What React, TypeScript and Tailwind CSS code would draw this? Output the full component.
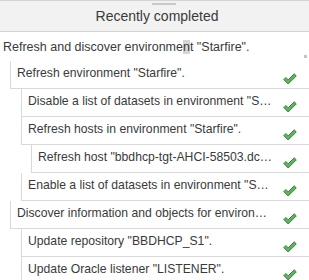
import React from 'react';

type Task = { label: string; level: number };

const TASKS: Task[] = [
  { label: 'Refresh environment "Starfire".', level: 1 },
  { label: 'Disable a list of datasets in environment "Starfire".', level: 2 },
  { label: 'Refresh hosts in environment "Starfire".', level: 2 },
  { label: 'Refresh host "bbdhcp-tgt-AHCI-58503.dcenter.example.com".', level: 3 },
  { label: 'Enable a list of datasets in environment "Starfire".', level: 2 },
  { label: 'Discover information and objects for environment "Starfire".', level: 1 },
  { label: 'Update repository "BBDHCP_S1".', level: 2 },
  { label: 'Update Oracle listener "LISTENER".', level: 2 },
];

const INDENT: Record<number, string> = {
  1: 'ml-[10px]',
  2: 'ml-[21px]',
  3: 'ml-[31px]',
};

function Check() {
  return (
    <svg width="14" height="12" viewBox="0 0 14 12" className="block">
      <polygon
        points="0.8,6.6 2.9,4.5 5.2,6.8 11.2,0.8 13.3,2.9 5.2,11"
        fill="#62b162"
        stroke="#3b803b"
        strokeWidth="1"
        strokeLinejoin="round"
      />
    </svg>
  );
}

function TaskRow({ task }: { task: Task }) {
  return (
    <div
      className={`flex h-[28px] border-l border-b border-[#d9d9d9] ${INDENT[task.level]}`}
    >
      <span className="min-w-0 flex-1 truncate pl-[6px] pt-[5px] text-[12.2px] leading-[15px] text-[#3a3a3a]">
        {task.label}
      </span>
      <span className="mb-[3px] ml-[11px] mr-[12px] self-end">
        <Check />
      </span>
    </div>
  );
}

export default function App() {
  return (
    <div
      className="h-[280px] w-[309px] overflow-hidden bg-white"
      style={{ fontFamily: '"Liberation Sans", Arial, sans-serif' }}
    >
      {/* Header with drag grip */}
      <div className="relative flex h-[32px] items-center justify-center border-t border-b border-[#d4d4d4] bg-[#f2f2f2]">
        <div className="absolute left-[152px] top-[2px] h-[2px] w-[24px] bg-[#c9c9c9]" />
        <span className="pl-[5px] text-[14px] text-[#3a3a3a]">Recently completed</span>
      </div>

      {/* Root task (editable-looking field) */}
      <div className="relative h-[29px] pl-[3px] pt-[8px] text-[12.5px] leading-[15px] text-[#3a3a3a]">
        Refresh and discover environme<span className="bg-[#d6d6d6]">n</span>t "Starfire".
        <div className="absolute bottom-[3px] right-[2px] h-[3px] w-[3px] bg-[#c4c4c4]" />
      </div>

      {TASKS.map((t, i) => (
        <TaskRow key={i} task={t} />
      ))}
    </div>
  );
}
